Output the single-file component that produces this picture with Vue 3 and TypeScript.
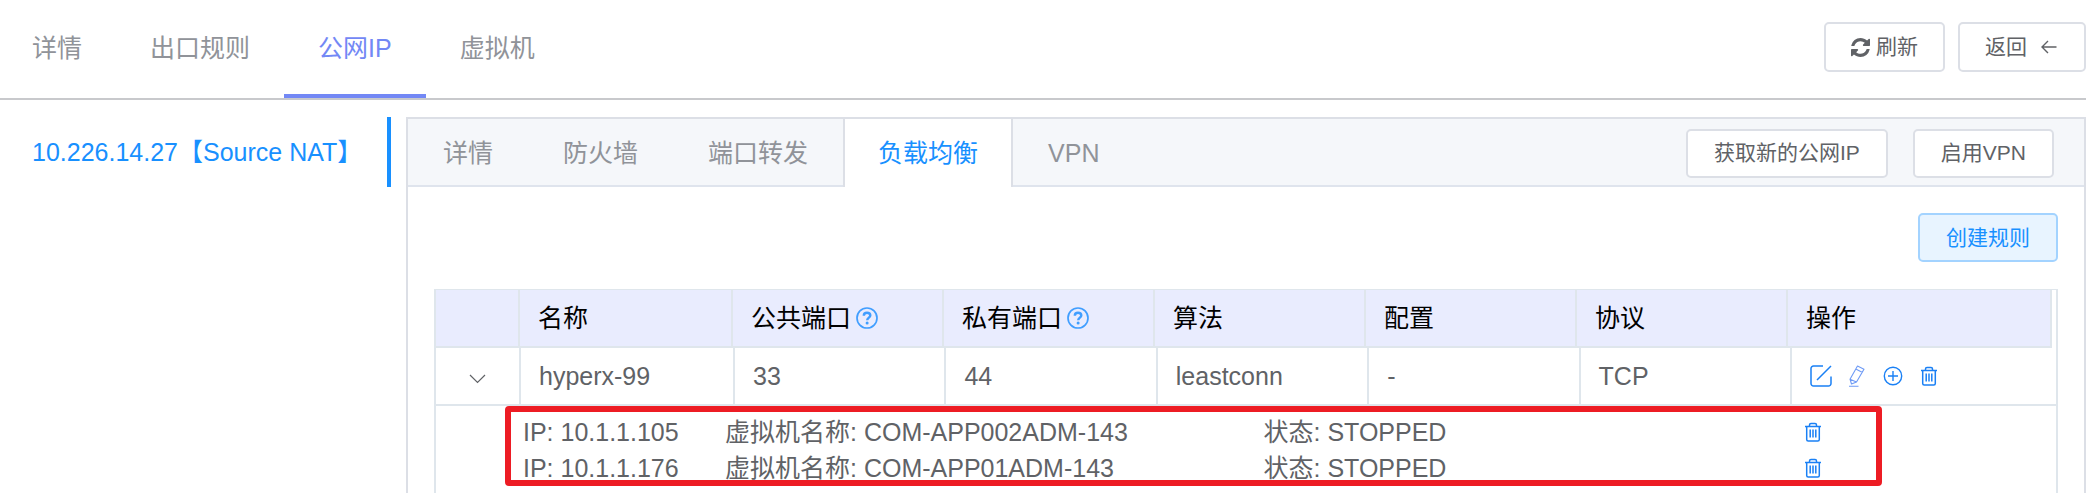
<script setup lang="ts">
import { ref } from 'vue'

interface Column {
  key: string
  label: string
  help?: boolean
}

interface Member {
  ip: string
  vm: string
  state: string
}

interface Rule {
  name: string
  publicPort: string
  privatePort: string
  algorithm: string
  config: string
  protocol: string
  members: Member[]
}

const mainTabs = ['详情', '出口规则', '公网IP', '虚拟机']
const subTabs = ['详情', '防火墙', '端口转发', '负载均衡', 'VPN']
const activeMain = ref('公网IP')
const activeSub = ref('负载均衡')

const columns: Column[] = [
  { key: 'name', label: '名称' },
  { key: 'publicPort', label: '公共端口', help: true },
  { key: 'privatePort', label: '私有端口', help: true },
  { key: 'algorithm', label: '算法' },
  { key: 'config', label: '配置' },
  { key: 'protocol', label: '协议' },
  { key: 'actions', label: '操作' },
]

const rules = ref<Rule[]>([
  {
    name: 'hyperx-99',
    publicPort: '33',
    privatePort: '44',
    algorithm: 'leastconn',
    config: '-',
    protocol: 'TCP',
    members: [
      { ip: '10.1.1.105', vm: 'COM-APP002ADM-143', state: 'STOPPED' },
      { ip: '10.1.1.176', vm: 'COM-APP01ADM-143', state: 'STOPPED' },
    ],
  },
])

const expanded = ref(true)
</script>

<template>
  <div class="page">
    <header class="topbar">
      <nav class="main-tabs" role="tablist">
        <button
          v-for="tab in mainTabs"
          :key="tab"
          type="button"
          role="tab"
          class="main-tab"
          :class="{ active: tab === activeMain }"
          :aria-selected="tab === activeMain"
          @click="activeMain = tab"
        >{{ tab }}</button>
      </nav>
      <div class="top-actions">
        <button type="button" class="btn tall">
          <svg class="refresh" viewBox="0 0 1536 1536" aria-hidden="true">
            <path fill="currentColor" d="M1511 928q0 5-1 7-64 268-268 434.5t-478 166.5q-146 0-282.500-55t-243.500-157l-129 129q-19 19-45 19t-45-19-19-45v-448q0-26 19-45t45-19h448q26 0 45 19t19 45-19 45l-137 137q71 66 161 102t187 36q134 0 250-65t186-179q11-17 53-117 8-23 30-23h192q13 0 22.500 9.500t9.500 22.500zm25-800v448q0 26-19 45t-45 19h-448q-26 0-45-19t-19-45 19-45l138-138q-148-137-349-137-134 0-250 65t-186 179q-11 17-53 117-8 23-30 23h-199q-13 0-22.500-9.500t-9.500-22.500v-7q65-268 270-434.500t480-166.500q146 0 284 55.500t245 156.500l130-129q19-19 45-19t45 19 19 45z" />
          </svg>
          <span>刷新</span>
        </button>
        <button type="button" class="btn tall back">
          <span>返回</span>
          <svg class="arrow" viewBox="0 0 20 20" aria-hidden="true">
            <path d="M17.500 10H3M9 4 3 10l6 6" fill="none" stroke="currentColor" stroke-width="1.400" />
          </svg>
        </button>
      </div>
    </header>

    <main class="main">
      <aside class="sidebar">
        <a href="#" class="ip-link">10.226.14.27【Source NAT】</a>
      </aside>

      <section class="panel">
        <div class="panel-head">
          <nav class="sub-tabs" role="tablist">
            <button
              v-for="tab in subTabs"
              :key="tab"
              type="button"
              role="tab"
              class="sub-tab"
              :class="{ active: tab === activeSub }"
              :aria-selected="tab === activeSub"
              @click="activeSub = tab"
            >{{ tab }}</button>
          </nav>
          <div class="panel-actions">
            <button type="button" class="btn">获取新的公网IP</button>
            <button type="button" class="btn">启用VPN</button>
          </div>
        </div>

        <div class="panel-body">
          <div class="toolbar">
            <button type="button" class="btn primary">创建规则</button>
          </div>

          <div class="rules">
            <div class="head-wrap">
              <table class="grid head">
                <colgroup>
                  <col class="col-expand" />
                  <col class="col-name" />
                  <col v-for="n in 5" :key="n" />
                  <col class="col-actions" />
                </colgroup>
                <thead>
                  <tr>
                    <th></th>
                    <th v-for="c in columns" :key="c.key" scope="col">
                      <span class="th-label">
                        {{ c.label }}
                        <svg v-if="c.help" class="help" viewBox="0 0 22 22" aria-hidden="true">
                          <circle cx="11" cy="11" r="10" fill="none" stroke="currentColor" stroke-width="1.700" />
                          <path d="M7.800 8.700C7.800 6.700 9.200 5.700 11 5.700s3.300 1.100 3.300 2.800c0 2-3.100 2.300-3.100 4.700" fill="none" stroke="currentColor" stroke-width="2.400" />
                          <circle cx="11.100" cy="15.900" r="1.500" fill="currentColor" />
                        </svg>
                      </span>
                    </th>
                  </tr>
                </thead>
              </table>
            </div>

            <table class="grid body">
              <colgroup>
                <col class="col-expand" />
                <col class="col-name" />
                <col v-for="n in 5" :key="n" />
                <col class="col-actions" />
              </colgroup>
              <tbody v-for="rule in rules" :key="rule.name">
                <tr class="rule-row">
                  <td class="expand-cell">
                    <button type="button" class="icon-btn" aria-label="展开" :aria-expanded="expanded" @click="expanded = !expanded">
                      <svg viewBox="0 0 22 22"><path d="m3 8 7.500 7.500L18 8" fill="none" stroke="#606266" stroke-width="1.200" /></svg>
                    </button>
                  </td>
                  <td>{{ rule.name }}</td>
                  <td>{{ rule.publicPort }}</td>
                  <td>{{ rule.privatePort }}</td>
                  <td>{{ rule.algorithm }}</td>
                  <td>{{ rule.config }}</td>
                  <td>{{ rule.protocol }}</td>
                  <td>
                    <div class="row-actions">
                      <button type="button" class="icon-btn" aria-label="编辑">
                        <svg viewBox="0 0 22 22"><path d="M13 1H3.500A2.500 2.500 0 0 0 1 3.500v15A2.500 2.500 0 0 0 3.500 21h15a2.500 2.500 0 0 0 2.500-2.500V11.500M7 15 21 1" fill="none" stroke="currentColor" stroke-width="1.500" /></svg>
                      </button>
                      <button type="button" class="icon-btn light" aria-label="标记">
                        <svg viewBox="0 0 22 22"><path d="M11.500 1 18 4.200 10.500 17 5.500 19 4 14.200ZM9.800 4l6.700 3.400M4 14.200l6.500 2.800M3 21.200h9.500" fill="none" stroke="currentColor" stroke-width="1.100" stroke-linejoin="round" /></svg>
                      </button>
                      <button type="button" class="icon-btn" aria-label="添加">
                        <svg viewBox="0 0 22 22"><path d="M11 6v10M6 11h10" fill="none" stroke="currentColor" stroke-width="1.400" /><circle cx="11" cy="11" r="8.700" fill="none" stroke="currentColor" stroke-width="1.400" /></svg>
                      </button>
                      <button type="button" class="icon-btn" aria-label="删除">
                        <svg viewBox="0 0 22 22"><path d="M3 5.500h16M7.500 5.500V4A1.500 1.500 0 0 1 9 2.500h4A1.500 1.500 0 0 1 14.500 4v1.500M4.700 5.500v13A1.500 1.500 0 0 0 6.200 20h9.600a1.500 1.500 0 0 0 1.500-1.500v-13M8.200 8.500v8M11 8.500v8M13.800 8.500v8" fill="none" stroke="currentColor" stroke-width="1.500" /></svg>
                      </button>
                    </div>
                  </td>
                </tr>
                <tr v-if="expanded">
                  <td class="members-cell" colspan="8">
                    <ul class="members">
                      <li v-for="m in rule.members" :key="m.ip" class="member">
                        <span>IP: {{ m.ip }}</span>
                        <span>虚拟机名称: {{ m.vm }}</span>
                        <span>状态: {{ m.state }}</span>
                        <button type="button" class="icon-btn" aria-label="移除">
                          <svg viewBox="0 0 22 22"><path d="M3 5.500h16M7.500 5.500V4A1.500 1.500 0 0 1 9 2.500h4A1.500 1.500 0 0 1 14.500 4v1.500M4.700 5.500v13A1.500 1.500 0 0 0 6.200 20h9.600a1.500 1.500 0 0 0 1.500-1.500v-13M8.200 8.500v8M11 8.500v8M13.800 8.500v8" fill="none" stroke="currentColor" stroke-width="1.500" /></svg>
                        </button>
                      </li>
                    </ul>
                  </td>
                </tr>
              </tbody>
            </table>
          </div>
        </div>
      </section>
    </main>
  </div>
</template>

<style>
body {
  margin: 0;
  background: #fff;
}
</style>

<style scoped>
.page {
  box-sizing: border-box;
  min-height: 100vh;
  padding-right: 6px;
  display: flex;
  flex-direction: column;
  font-family: "Liberation Sans", "Noto Sans CJK SC", sans-serif;
  font-size: 25px;
  line-height: 36px;
  color: #606266;
}

.page *,
.page *::after {
  box-sizing: border-box;
}

button {
  margin: 0;
  padding: 0;
  border: 0;
  background: none;
  font: inherit;
  color: inherit;
  white-space: nowrap;
  cursor: pointer;
}

.topbar {
  height: 100px;
  flex: none;
  display: flex;
  justify-content: space-between;
  border-bottom: 2px solid #c8c9cc;
}

.main-tabs {
  display: flex;
}

.main-tab {
  padding: 0 34px;
  border-top: 2px solid transparent;
  border-bottom: 4px solid transparent;
  color: #909399;
}

.main-tab:first-child {
  padding-left: 32px;
}

.main-tab.active {
  color: #7388f5;
  border-bottom-color: #7388f5;
}

.top-actions {
  display: flex;
  align-items: center;
  gap: 13px;
  padding-bottom: 4px;
}

.btn {
  height: 49px;
  padding: 0 26px;
  display: inline-flex;
  align-items: center;
  justify-content: center;
  gap: 6px;
  border: 2px solid #dcdfe6;
  border-radius: 5px;
  background: #fff;
  font-size: 21px;
  line-height: 30px;
}

.btn.tall {
  height: 50px;
  padding: 0 25px;
}

.btn.back {
  gap: 12px;
}

.btn.primary {
  color: #1890ff;
  border-color: #a3d3ff;
  background: #e8f4ff;
}

.refresh {
  width: 19px;
  height: 19px;
}

.arrow {
  width: 20px;
  height: 20px;
}

.main {
  flex: 1;
  display: flex;
  align-items: stretch;
  gap: 15px;
  padding-top: 17px;
}

.sidebar {
  width: 391px;
  flex: none;
}

.ip-link {
  height: 70px;
  padding-left: 32px;
  display: flex;
  align-items: center;
  border-right: 4px solid #1890ff;
  color: #1890ff;
  text-decoration: none;
  white-space: nowrap;
}

.panel {
  flex: 1;
  min-width: 0;
  display: flex;
  flex-direction: column;
  border: 2px solid #dcdfe6;
  border-bottom: 0;
}

.panel-head {
  height: 68px;
  display: flex;
  justify-content: space-between;
  background: #f5f7fa;
  box-shadow: inset 0 -2px #dfe4ed;
}

.sub-tabs {
  display: flex;
}

.sub-tab {
  padding: 0 35px;
  color: #909399;
}

.sub-tab.active {
  background: #fff;
  box-shadow: inset 2px 0 #dcdfe6, inset -2px 0 #dcdfe6;
  color: #1890ff;
}

.panel-actions {
  display: flex;
  align-items: center;
  gap: 25px;
  padding-right: 30px;
}

.panel-body {
  flex: 1;
  display: flex;
  flex-direction: column;
  padding: 26px 26px 0;
}

.toolbar {
  display: flex;
  justify-content: flex-end;
  margin-bottom: 27px;
}

.rules {
  flex: 1;
  border: 2px solid #dfe6ec;
  border-top-width: 1px;
  border-bottom: 0;
}

.head-wrap {
  padding-right: 4px;
}

.grid {
  width: 100%;
  table-layout: fixed;
  border-collapse: separate;
  border-spacing: 0;
}

.col-expand {
  width: 85px;
}

.col-name {
  width: 214px;
}

.head .col-expand {
  width: 84px;
}

.head .col-name {
  width: 213px;
}

.col-actions {
  width: 264px;
}

th,
td {
  height: 58px;
  padding: 0 16px 0 18px;
  border-right: 2px solid #dfe6ec;
  border-bottom: 2px solid #dfe6ec;
  text-align: left;
  font-weight: 400;
  white-space: nowrap;
}

th {
  background: #e9ecfe;
  color: #000;
}

.th-label {
  display: flex;
  align-items: center;
  gap: 5px;
}

.help {
  width: 22px;
  height: 22px;
  color: #409eff;
}

.body td:last-child {
  border-right: 0;
}

.body .expand-cell {
  padding: 0;
  text-align: center;
}

.icon-btn {
  width: 22px;
  height: 22px;
  display: inline-flex;
  vertical-align: middle;
  color: #1a80f5;
}

.icon-btn svg {
  width: 22px;
  height: 22px;
}

.icon-btn.light {
  color: #6f9bf5;
}

.row-actions {
  display: flex;
  align-items: center;
  gap: 14px;
}

.body .members-cell {
  height: auto;
  padding: 0;
  border: 0;
}

.members {
  position: relative;
  width: 85%;
  margin: 0 0 0 69px;
  padding: 8px 0 0 18px;
  list-style: none;
}

.members::after {
  content: "";
  position: absolute;
  inset: 0;
  border: 6px solid #ed1c24;
  border-radius: 4px;
  pointer-events: none;
}

.member {
  height: 36px;
  display: grid;
  grid-template-columns: 202px 1fr 1fr 80px;
  align-items: center;
}
</style>
